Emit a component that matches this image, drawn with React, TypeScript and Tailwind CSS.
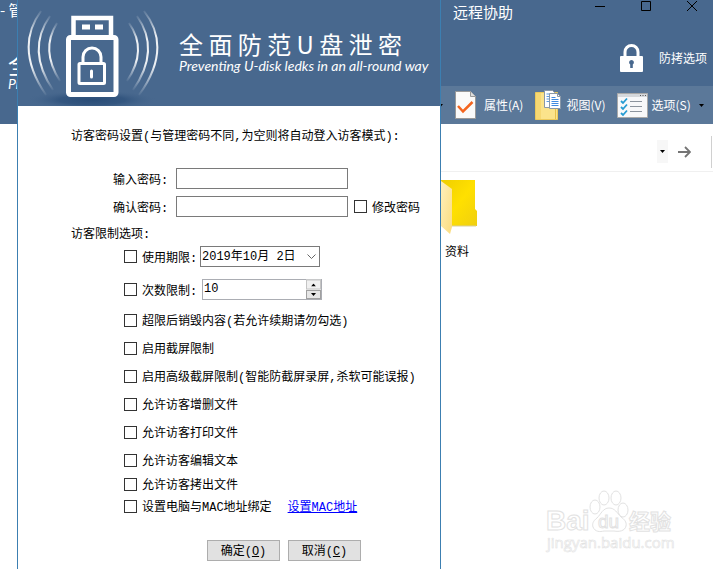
import { useState } from 'react'

const OPTIONS = [
  '超限后销毁内容(若允许续期请勿勾选)',
  '启用截屏限制',
  '启用高级截屏限制(智能防截屏录屏,杀软可能误报)',
  '允许访客增删文件',
  '允许访客打印文件',
  '允许访客编辑文本',
]

function Check({ label, className }: { label: string; className?: string }) {
  return (
    <label className={`flex h-4 items-center gap-[5px] whitespace-nowrap ${className ?? ''}`}>
      <input
        type="checkbox"
        className="h-[13px] w-[13px] shrink-0 appearance-none border border-[#333] bg-white checked:bg-[#333]"
      />
      <span className="pt-1">{label}</span>
    </label>
  )
}

function UsbLogo() {
  return (
    <svg width="150" height="106" viewBox="18 0 150 106" className="shrink-0" aria-hidden="true">
      <defs>
        <linearGradient id="fade" x1="0" y1="0" x2="0" y2="1">
          <stop offset="0" stopColor="#fff" stopOpacity="0.1" />
          <stop offset="0.3" stopColor="#fff" stopOpacity="0.9" />
          <stop offset="0.65" stopColor="#fff" stopOpacity="0.9" />
          <stop offset="1" stopColor="#fff" stopOpacity="0.05" />
        </linearGradient>
        <radialGradient id="shade">
          <stop offset="0" stopColor="#2a4d77" />
          <stop offset="0.5" stopColor="#2f527c" stopOpacity="0.8" />
          <stop offset="1" stopColor="#48688e" stopOpacity="0" />
        </radialGradient>
      </defs>
      <ellipse cx="92" cy="100" rx="66" ry="10" fill="url(#shade)" />
      <g fill="none" stroke="url(#fade)" strokeWidth="2">
        <path d="M41 11Q14 48 46 95" />
        <path d="M50 16Q26 50 53 90" />
        <path d="M57 23Q40 50 60 81" />
        <path d="M144 11Q173 48 139 95" />
        <path d="M137 16Q161 50 133 90" />
        <path d="M129 23Q148 50 127 81" />
      </g>
      <g fill="none" stroke="#fff">
        <path d="M73.500 36V18H111V36" strokeWidth="4.500" />
        <rect x="68.500" y="37.500" width="47.500" height="57" rx="2" strokeWidth="5" />
        <path d="M83 63V57a9 9 0 0 1 18 0V63" strokeWidth="3" />
        <rect x="79" y="63.500" width="25.500" height="20" rx="1" strokeWidth="3" />
        <path d="M91.500 71v6" strokeWidth="3" strokeLinecap="round" />
      </g>
      <path d="M82 24.500h8v5h-8zM95 24.500h8v5h-8z" fill="#fff" />
    </svg>
  )
}

function Caret() {
  return (
    <svg width="5" height="3" viewBox="0 0 5 3" className="shrink-0" aria-hidden="true">
      <path d="M0 0h5L2.500 3z" fill="#000" />
    </svg>
  )
}

function PropertyIcon() {
  return (
    <svg width="21" height="28" viewBox="0 0 21 28" aria-hidden="true">
      <path d="M.5.500h15l5 5v22H.5z" fill="#fafafa" stroke="#999" />
      <path d="M15.500.500v5h5" fill="#ddd" stroke="#999" />
      <path d="M3 15l5 5.500L17.500 11" fill="none" stroke="#f4651f" strokeWidth="2.500" />
    </svg>
  )
}

function ViewIcon() {
  return (
    <svg width="27" height="30" viewBox="0 0 27 30" aria-hidden="true">
      <path d="M.5 2.500h22v27H.5z" fill="#fbe38b" stroke="#ecc95a" />
      <path d="M1 3h5v26H1z" fill="#f6d873" />
      <path d="M20.500 18v11" stroke="#e6c04c" />
      <path d="M9.500.500h8l2 2v15h-10z" fill="#fff" stroke="#8a98a8" />
      <path d="M11.500 4h4M11.500 6.500h3M11.500 9h3M11.500 11.500h3" stroke="#5b9be0" />
      <path d="M14.500 3.500h8l3 3v12h-11z" fill="#fff" stroke="#8a98a8" />
      <path d="M22.500 3.500v3h3" fill="none" stroke="#8a98a8" />
      <path d="M16.500 7.500h4M16.500 9.500h7M16.500 11.500h7M16.500 13.500h7M16.500 15.500h7" stroke="#3f8ae0" />
    </svg>
  )
}

function OptionsIcon() {
  return (
    <svg width="31" height="25" viewBox="0 0 31 25" aria-hidden="true">
      <path d="M.5.500h30v24H.5z" fill="#f7f8fa" stroke="#a9a9a9" />
      <path d="M1 1h29v3H1z" fill="#d5d8dc" />
      <path d="M23 2.500h1M25.500 2.500h1M28 2.500h1" stroke="#555" />
      <path d="M4 8l2 2 4-4.500M4 14l2 2 4-4.500M4 20l2 2 4-4.500" fill="none" stroke="#259bd2" strokeWidth="1.800" />
      <path d="M13 8.500h12M13 13.500h12M13 18.500h12" stroke="#8c949e" />
    </svg>
  )
}

function Watermark() {
  return (
    <svg
      width="136"
      height="70"
      viewBox="0 0 136 70"
      className="pointer-events-none absolute right-8 bottom-3"
      fill="#fff"
      stroke="#e2e2e2"
      strokeWidth="1"
      aria-hidden="true"
    >
      <g fontFamily="Liberation Sans, Noto Sans CJK SC, sans-serif" fontWeight="700">
        <text x="1" y="43" fontSize="28">Bai</text>
        <text x="84" y="42" fontSize="21" fontFamily="Noto Sans CJK SC, sans-serif">经验</text>
        <ellipse cx="50" cy="20" rx="5" ry="7" />
        <ellipse cx="59" cy="11" rx="5" ry="7" />
        <ellipse cx="71" cy="11" rx="5" ry="7" />
        <ellipse cx="78" cy="23" rx="5" ry="7" />
        <path d="M64 21c-6 0-8 6-12 10c-4 3-5 6-4 9c2 5 7 5 11 4h10c5 1 11 0 12-5c1-4-2-7-5-9c-4-4-6-9-12-9z" />
        <text x="53" y="41" fontSize="19" fontWeight="400">du</text>
      </g>
      <text x="2" y="61" fontSize="15" strokeWidth="0.600" fontFamily="Open Sans, sans-serif">
        jingyan.baidu.com
      </text>
    </svg>
  )
}

export default function App() {
  const [count, setCount] = useState(10)

  return (
    <div className="flex min-h-screen bg-white font-['Liberation_Mono','Noto_Sans_CJK_SC',monospace] text-xs text-black">
      {/* Main window, left edge */}
      <aside className="w-[17px] shrink-0 overflow-hidden">
        <div className="h-[124px] bg-[#48688e] whitespace-nowrap text-white">
          <p className="h-5 font-['Noto_Sans_CJK_SC',sans-serif] text-[15px] leading-5">- 管理</p>
          <p className="mt-8 pl-2 font-['Noto_Sans_CJK_SC',sans-serif] text-2xl leading-6">全</p>
          <p className="pl-2 font-['Lato',sans-serif] text-sm leading-4 italic">Preventing</p>
        </div>
      </aside>

      {/* Dialog */}
      <section className="flex w-[424px] shrink-0 flex-col border-x border-[#3c7fb1] bg-white">
        <header className="flex h-[106px] bg-[#48688e] text-white">
          <UsbLogo />
          <div className="pt-7 pl-[11px] whitespace-nowrap">
            <h1 className="font-['Noto_Sans_CJK_SC',sans-serif] text-2xl leading-8">全 面 防 范 U 盘 泄 密</h1>
            <p className="font-['Lato',sans-serif] text-sm leading-3 italic">
              Preventing U-disk ledks in an all-round way
            </p>
          </div>
        </header>

        <form className="pt-[21px]" onSubmit={e => e.preventDefault()}>
          <h2 className="pl-[53px] leading-5 whitespace-nowrap">
            访客密码设置(与管理密码不同,为空则将自动登入访客模式):
          </h2>

          <div className="mt-[21px] flex flex-col gap-[7px] pl-[95px]">
            <div className="flex h-[21px] items-center">
              <label htmlFor="pwd" className="w-[63px] pt-1">输入密码:</label>
              <input id="pwd" type="password" className="h-[21px] w-[172px] border border-[#7a7a7a] px-1 outline-none" />
            </div>
            <div className="flex h-[21px] items-center">
              <label htmlFor="pwd2" className="w-[63px] pt-1">确认密码:</label>
              <input id="pwd2" type="password" className="h-[21px] w-[172px] border border-[#7a7a7a] px-1 outline-none" />
              <Check label="修改密码" className="ml-1.5" />
            </div>
          </div>

          <h2 className="mt-2 pl-[53px] leading-5">访客限制选项:</h2>

          <div className="mt-px pl-[106px]">
            <div className="flex h-[21px] items-center">
              <Check label="使用期限:" className="w-[76px]" />
              <div className="relative">
                <select
                  aria-label="使用期限"
                  className="block h-[21px] w-[120px] appearance-none border border-[#7a7a7a] bg-white pl-px text-xs outline-none"
                >
                  <option>2019年10月 2日</option>
                </select>
                <svg width="9" height="5" viewBox="0 0 9 5" className="pointer-events-none absolute top-2 right-1" aria-hidden="true">
                  <path d="M.5.500l4 4 4-4" fill="none" stroke="#666" />
                </svg>
              </div>
            </div>

            <div className="mt-3 flex h-[21px] items-center">
              <Check label="次数限制:" className="w-[78px]" />
              <div className="flex h-[21px] w-[120px] border border-[#abadb3]">
                <input
                  aria-label="次数限制"
                  value={count}
                  onChange={e => setCount(Number(e.target.value) || 0)}
                  className="min-w-0 flex-1 px-px pb-0.5 outline-none"
                />
                <div className="flex w-[15px] flex-col">
                  <button
                    type="button"
                    aria-label="增加"
                    onClick={() => setCount(count + 1)}
                    className="flex flex-1 rotate-180 items-center justify-center border border-[#c4c4c4] bg-[#f0f0f0]"
                  >
                    <Caret />
                  </button>
                  <button
                    type="button"
                    aria-label="减少"
                    onClick={() => setCount(Math.max(0, count - 1))}
                    className="flex flex-1 items-center justify-center border border-[#a0a0a0] bg-[#e6e6e6]"
                  >
                    <Caret />
                  </button>
                </div>
              </div>
            </div>

            <div className="mt-3 flex flex-col gap-3">
              {OPTIONS.map(label => (
                <Check key={label} label={label} />
              ))}
            </div>
            <Check label="允许访客拷出文件" className="mt-2" />
            <div className="mt-1.5 flex h-4 items-center gap-4">
              <Check label="设置电脑与MAC地址绑定" />
              <a href="#mac" className="pt-1 text-[#0000ff] underline">设置MAC地址</a>
            </div>
          </div>

          <div className="mt-[26px] flex gap-2 pl-[189px]">
            <button type="submit" className="h-[21px] w-[73px] border border-[#adadad] bg-[#e1e1e1] pt-0.5">
              确定(<u>O</u>)
            </button>
            <button type="button" className="h-[21px] w-[73px] border border-[#adadad] bg-[#e1e1e1] pt-0.5">
              取消(<u>C</u>)
            </button>
          </div>
        </form>
      </section>

      {/* Main window, right side */}
      <main className="relative flex min-w-0 flex-1 flex-col font-['Noto_Sans_CJK_SC',sans-serif]">
        <header className="h-[86px] bg-[#48688e] text-white">
          <div className="flex h-6 items-start justify-between pl-3">
            <span className="text-[15px] leading-6">远程协助</span>
            <svg width="118" height="12" viewBox="595 0 118 12" aria-hidden="true">
              <path d="M595 6.500h10M641.500 1.500h9v9h-9zM687 1l10 10M697 1l-10 10" fill="none" stroke="#000" />
            </svg>
          </div>
          <div className="mt-5 flex items-center justify-end gap-4 pr-1.5">
            <svg width="23" height="28" viewBox="0 0 23 28" aria-hidden="true">
              <path d="M5 13V8a6.500 6.500 0 0 1 13 0v5" fill="none" stroke="#fff" strokeWidth="3" />
              <rect y="12" width="23" height="16" rx="1" fill="#fff" />
              <path d="M11.500 16a2.500 2.500 0 0 1 1.300 4.600V24h-2.600v-3.400A2.500 2.500 0 0 1 11.500 16z" fill="#48688e" />
            </svg>
            <span>防拷选项</span>
          </div>
        </header>

        <nav className="flex h-[38px] items-center bg-[#5b7899] whitespace-nowrap text-white">
          <span className="flex w-0.5 justify-end overflow-hidden"><Caret /></span>
          <button type="button" className="ml-3 flex items-center gap-2"><PropertyIcon />属性(A)</button>
          <button type="button" className="ml-3 flex items-center gap-1"><ViewIcon />视图(V)</button>
          <button type="button" className="ml-3 flex items-center gap-[3px]"><OptionsIcon />选项(S)</button>
          <span className="ml-2"><Caret /></span>
        </nav>

        <div className="flex h-12 items-center justify-end gap-2.5 border-b border-[#f0f0f0] pt-2">
          <button type="button" aria-label="历史" className="flex h-[23px] w-[11px] items-center justify-center bg-[#f7f7f7]">
            <Caret />
          </button>
          <svg width="13" height="12" viewBox="0 0 13 12" aria-hidden="true">
            <path d="M0 6h12M7 1l5 5-5 5" fill="none" stroke="#757575" strokeWidth="1.800" />
          </svg>
          <span className="ml-2.5 h-8 w-0.5 border-l border-[#d0d0d0]" />
        </div>

        <figure className="mt-2 w-9">
          <svg width="36" height="55" viewBox="0 0 36 55" aria-hidden="true">
            <defs>
              <linearGradient id="back" x1="0" y1="0" x2="1" y2="1">
                <stop offset="0" stopColor="#efce00" />
                <stop offset="0.5" stopColor="#ffe000" />
                <stop offset="1" stopColor="#f0cf10" />
              </linearGradient>
              <linearGradient id="flap" x1="0" y1="0" x2="1" y2="1">
                <stop offset="0" stopColor="#fff0bd" />
                <stop offset="1" stopColor="#fbdc7d" />
              </linearGradient>
            </defs>
            <path d="M0 0h34v29l2 2v15H9L0 40z" fill="url(#back)" />
            <path d="M9 46h26" stroke="#d9cf9a" />
            <path d="M0 1l11 8v38l-2 7L0 46z" fill="url(#flap)" />
          </svg>
          <figcaption className="mt-2 pl-1 leading-4">资料</figcaption>
        </figure>

        <Watermark />
      </main>
    </div>
  )
}
